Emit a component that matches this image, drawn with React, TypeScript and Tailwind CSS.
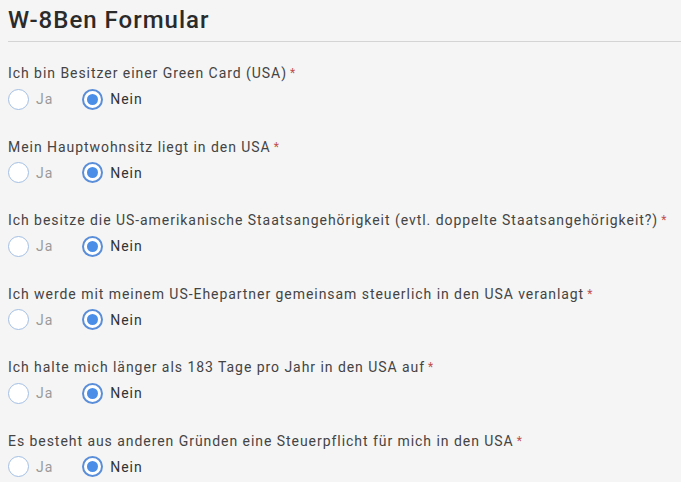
import { useState } from 'react'

const questions = [
  'Ich bin Besitzer einer Green Card (USA)',
  'Mein Hauptwohnsitz liegt in den USA',
  'Ich besitze die US-amerikanische Staatsangehörigkeit (evtl. doppelte Staatsangehörigkeit?)',
  'Ich werde mit meinem US-Ehepartner gemeinsam steuerlich in den USA veranlagt',
  'Ich halte mich länger als 183 Tage pro Jahr in den USA auf',
  'Es besteht aus anderen Gründen eine Steuerpflicht für mich in den USA',
]

function Radio({ checked, label, onClick }: { checked: boolean; label: string; onClick: () => void }) {
  return (
    <button type="button" onClick={onClick} className="flex items-center gap-[7px]">
      <span
        className={
          checked
            ? 'flex h-[21px] w-[21px] items-center justify-center rounded-full border-2 border-[#5b8ed8] bg-white'
            : 'flex h-[21px] w-[21px] items-center justify-center rounded-full border-[1.5px] border-[#a3bfe4] bg-white'
        }
      >
        {checked && <span className="h-[11px] w-[11px] rounded-full bg-[#4a8ee8]" />}
      </span>
      <span className={checked ? 'text-[#333]' : 'text-[#9a9a9a]'}>{label}</span>
    </button>
  )
}

export default function App() {
  const [answers, setAnswers] = useState<boolean[]>(questions.map(() => false))

  return (
    <div className="min-h-[482px] bg-[#f5f5f5] pl-2 font-['Roboto',sans-serif] text-[14px] tracking-[0.95px]">
      <h1 className="pt-[3px] text-[24px] font-medium leading-[34px] tracking-[1px] text-[#2b2b2b]">W-8Ben Formular</h1>
      <div className="mt-[4px] h-px bg-[#d4d4d4]" />

      <div className="mt-[21px] flex flex-col gap-[26.6px] pr-2">
        {questions.map((q, i) => (
          <div key={q} className="flex flex-col gap-[5px]">
            <div className="leading-[20px] text-[#444]">
              {q}
              <span className="ml-[3px] align-[1px] text-[12px] text-[#c0504d]">*</span>
            </div>
            <div className="flex items-center gap-[29px] leading-[22px]">
              <Radio checked={answers[i]} label="Ja" onClick={() => setAnswers(a => a.map((v, j) => (j === i ? true : v)))} />
              <Radio checked={!answers[i]} label="Nein" onClick={() => setAnswers(a => a.map((v, j) => (j === i ? false : v)))} />
            </div>
          </div>
        ))}
      </div>
    </div>
  )
}
